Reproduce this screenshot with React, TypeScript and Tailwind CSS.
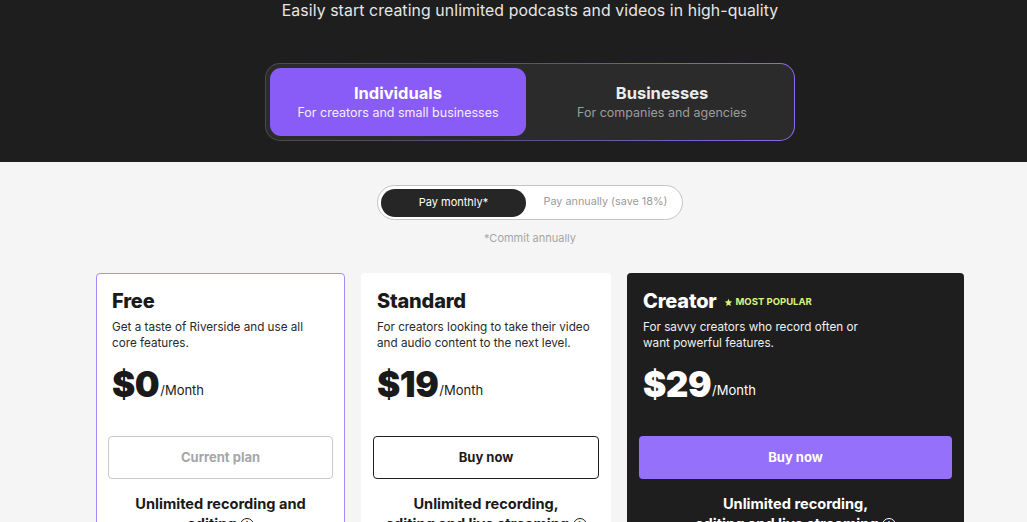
import React from "react";

const font = { fontFamily: "Inter, 'Noto Sans', sans-serif" };

function Info({ dark }: { dark?: boolean }) {
  return (
    <span
      className={`inline-flex items-center justify-center w-[14px] h-[14px] rounded-full border-[1.5px] text-[9px] font-bold align-middle ${
        dark ? "border-white text-white" : "border-[#1a1a1a] text-[#1a1a1a]"
      }`}
    >
      i
    </span>
  );
}

type Plan = {
  name: string;
  desc: string[];
  price: string;
  button: string;
  variant: "current" | "outline" | "purple";
  dark?: boolean;
  popular?: boolean;
  feature: [string, string];
  width: string;
  border?: boolean;
};

const plans: Plan[] = [
  {
    name: "Free",
    desc: ["Get a taste of Riverside and use all", "core features."],
    price: "$0",
    button: "Current plan",
    variant: "current",
    feature: ["Unlimited recording and", "editing"],
    width: "w-[249px]",
    border: true,
  },
  {
    name: "Standard",
    desc: ["For creators looking to take their video", "and audio content to the next level."],
    price: "$19",
    button: "Buy now",
    variant: "outline",
    feature: ["Unlimited recording,", "editing and live streaming"],
    width: "w-[250px]",
  },
  {
    name: "Creator",
    desc: ["For savvy creators who record often or", "want powerful features."],
    price: "$29",
    button: "Buy now",
    variant: "purple",
    dark: true,
    popular: true,
    feature: ["Unlimited recording,", "editing and live streaming"],
    width: "w-[337px]",
  },
];

function Card({ p }: { p: Plan }) {
  const text = p.dark ? "text-white" : "text-[#1a1a1a]";
  return (
    <div
      className={`${p.width} h-[320px] shrink-0 rounded-[4px] ${
        p.border ? "border border-[#a78bfa] px-[11px] pt-[15px]" : "px-3 pt-[16px]"
      } ${p.dark ? "bg-[#1e1e1e]" : "bg-white"} ${text}`}
    >
      <div className="px-1">
        <div className="flex items-center gap-[7px]">
          <span className="text-[20px] leading-[24px] font-extrabold tracking-[-0.2px]">{p.name}</span>
          {p.popular && (
            <span className="flex items-center gap-[3px] text-[#d5f57b] text-[9.5px] font-bold mt-[2px]">
              <svg width="9" height="9" viewBox="0 0 24 24" fill="#d5f57b">
                <path d="M12 2l2.9 6.9 7.1.6-5.4 4.7 1.7 7.3L12 17.7 5.7 21.5l1.7-7.3L2 9.5l7.1-.6z" />
              </svg>
              MOST POPULAR
            </span>
          )}
        </div>
        <div
          className={`mt-[6px] text-[11.7px] leading-[16px] whitespace-nowrap ${
            p.dark ? "text-[#f0f0f0]" : "text-[#2a2a2a]"
          }`}
        >
          {p.desc.map((d) => (
            <div key={d}>{d}</div>
          ))}
        </div>
        <div className="mt-[13px] flex items-baseline">
          <span className="text-[35px] leading-[40px] font-black tracking-[-0.5px]">{p.price}</span>
          <span className="text-[13px] ml-[1px] relative top-[-2px]">/Month</span>
        </div>
      </div>
      <div
        className={`mt-[32px] h-[43px] rounded-[4px] flex items-center justify-center text-[13px] font-bold ${
          p.variant === "current"
            ? "border border-[#c9c9c9] text-[#a6a6a6]"
            : p.variant === "outline"
            ? "border border-[#1e1e1e] text-[#1a1a1a]"
            : "bg-[#9470fb] text-white"
        }`}
      >
        {p.button}
      </div>
      <div className="mt-[15px] text-center text-[14.6px] leading-[20px] font-bold whitespace-nowrap">
        <div>{p.feature[0]}</div>
        <div>
          {p.feature[1]} <Info dark={p.dark} />
        </div>
      </div>
    </div>
  );
}

export default function App() {
  return (
    <div className="w-[1027px] h-[522px] overflow-hidden bg-[#f5f5f5]" style={font}>
      <div className="bg-[#1e1e1e] h-[162px] pl-[33px] flex flex-col items-center">
        <div className="text-[15.8px] leading-[22px] text-[#e6e6e6] tracking-[0.1px]">
          Easily start creating unlimited podcasts and videos in high-quality
        </div>
        <div
          className="mt-[41px] w-[530px] h-[78px] rounded-[15px] p-[1px]"
          style={{ background: "linear-gradient(90deg, #4a4a4a 0%, #5a4f86 50%, #8b6cf0 100%)" }}
        >
          <div className="w-full h-full rounded-[14px] bg-[#2b2b2b] p-[4px] flex">
            <div className="w-[256px] h-full rounded-[11px] bg-[#8a5cf7] flex flex-col items-center justify-center">
              <div className="text-[16.5px] leading-[20px] font-bold text-white">Individuals</div>
              <div className="text-[12.5px] leading-[18px] text-[#f2eeff] mt-[1px]">For creators and small businesses</div>
            </div>
            <div className="flex-1 h-full pl-[8px] flex flex-col items-center justify-center">
              <div className="text-[16.5px] leading-[20px] font-bold text-[#ececec]">Businesses</div>
              <div className="text-[12.5px] leading-[18px] text-[#9d9d9d] mt-[1px]">For companies and agencies</div>
            </div>
          </div>
        </div>
      </div>
      <div className="pl-[33px] flex flex-col items-center">
        <div className="mt-[23px] w-[306px] h-[35px] rounded-full border border-[#c4c4c4] bg-white p-[3px] flex items-center">
          <div className="w-[145px] h-[28px] rounded-full bg-[#262626] text-white text-[11px] flex items-center justify-center">
            Pay monthly*
          </div>
          <div className="flex-1 pl-[6px] text-center text-[10.8px] text-[#9b9b9b]">Pay annually (save 18%)</div>
        </div>
        <div className="mt-[11px] text-[11px] leading-[14px] text-[#a5a5a5]">*Commit annually</div>
        <div className="mt-[28px] flex gap-4 items-start">
          {plans.map((p) => (
            <Card key={p.name} p={p} />
          ))}
        </div>
      </div>
    </div>
  );
}
